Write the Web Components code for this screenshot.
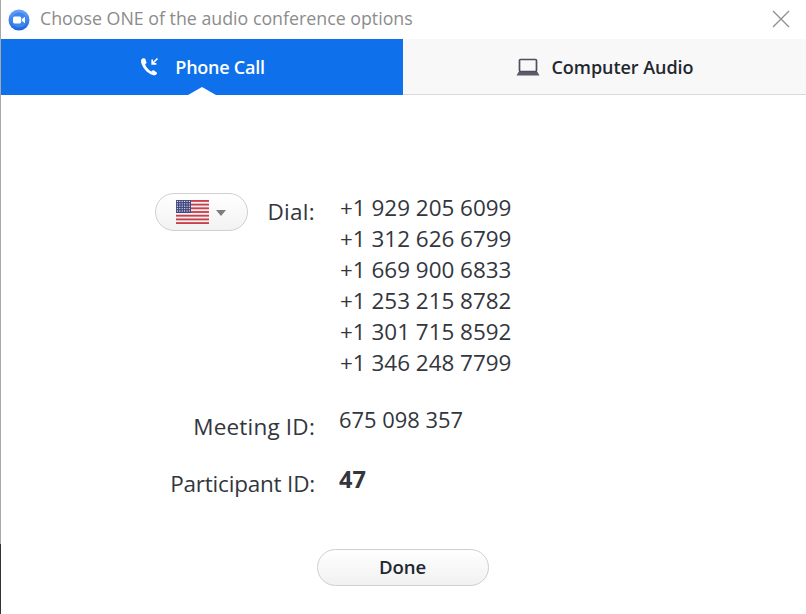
<!DOCTYPE html>
<html>
<head>
<meta charset="utf-8">
<title>Audio conference options</title>
<style>
  html, body { margin: 0; padding: 0; background: #fff; }
  body { width: 806px; height: 614px; overflow: hidden; font-family: "Open Sans", "Noto Sans", sans-serif; }
</style>
</head>
<body>
<audio-dialog>
  <title-bar slot="title">Choose ONE of the audio conference options</title-bar>
  <tab-strip slot="tabs"></tab-strip>
  <dial-panel slot="panel"></dial-panel>
</audio-dialog>

<script>
class AudioDialog extends HTMLElement {
  constructor() {
    super();
    const shadow = this.attachShadow({ mode: 'open' });
    shadow.innerHTML = `
      <style>
        :host {
          display: flex;
          flex-direction: column;
          box-sizing: border-box;
          width: 806px;
          height: 614px;
          background: #fff;
          border-left: 1px solid;
          border-image: linear-gradient(to bottom, #a8a8a8 0, #a8a8a8 543px, #333 543px, #333 100%) 1;
        }
      </style>
      <slot name="title"></slot>
      <slot name="tabs"></slot>
      <slot name="panel"></slot>
    `;
  }
}

class TitleBar extends HTMLElement {
  constructor() {
    super();
    const shadow = this.attachShadow({ mode: 'open' });
    shadow.innerHTML = `
      <style>
        :host {
          display: flex;
          align-items: center;
          height: 39px;
          flex: none;
          padding: 0 15px 0 7px;
          color: #8c8c8c;
          font-size: 17.8px;
        }
        svg { flex: none; }
        .logo { margin-right: 10px; }
        .text { flex: 1; white-space: nowrap; margin-top: -3px; }
      </style>
      <svg class="logo" width="22" height="22" viewBox="0 0 22 22">
        <defs>
          <linearGradient id="zoomBlue" x1="0" y1="0" x2="0" y2="1">
            <stop offset="0" stop-color="#6aa6f6"/>
            <stop offset="1" stop-color="#1b64dc"/>
          </linearGradient>
        </defs>
        <circle cx="11" cy="11" r="10.5" fill="url(#zoomBlue)"/>
        <circle cx="11" cy="11" r="7.6" fill="#3f86ee"/>
        <rect x="5" y="7.6" width="8.2" height="6.8" rx="1.6" fill="#fff"/>
        <path d="M14 10l3-2.2v6.4L14 12z" fill="#fff"/>
      </svg>
      <span class="text"><slot></slot></span>
      <svg width="19" height="19" viewBox="0 0 19 19">
        <path d="M1 1l16 16M17 1L1 17" stroke="#8f8f8f" stroke-width="1.3" fill="none"/>
      </svg>
    `;
  }
}

class TabStrip extends HTMLElement {
  constructor() {
    super();
    const shadow = this.attachShadow({ mode: 'open' });
    shadow.innerHTML = `
      <style>
        :host {
          display: grid;
          grid-template-columns: 402px 1fr;
          height: 56px;
          flex: none;
          box-sizing: border-box;
        }
        .tab {
          position: relative;
          display: flex;
          align-items: center;
          justify-content: center;
          gap: 12px;
          font-size: 18px;
          font-weight: 600;
          letter-spacing: -0.05px;
        }
        .active { background: #0e71eb; color: #fff; gap: 14px; letter-spacing: -0.25px; }
        .active::after {
          content: "";
          position: absolute;
          left: 50%;
          bottom: 0;
          margin-left: -14px;
          border-left: 14px solid transparent;
          border-right: 14px solid transparent;
          border-bottom: 8px solid #fff;
        }
        .idle { background: #f8f8f8; color: #23272f; border-bottom: 1px solid #d9d9d9; }
      </style>
      <div class="tab active">
        <svg width="22" height="22" viewBox="0 0 22 22" fill="none">
          <path d="M3.4 2.6c-1.2.8-1.7 2-1.3 3.6 1.2 5.4 6.2 11 11.6 12.8 1.8.6 3 .1 4-1.1.5-.6.4-1.2-.2-1.7l-2.4-1.8c-.6-.4-1.1-.3-1.6.2l-1 1c-2.9-1.4-5.2-4-6.4-7l1-1c.5-.5.6-1 .2-1.6L6.4 3c-.7-1-1.8-1.1-3-.4z" fill="#fff"/>
          <path d="M18.5 2.5l-5 5M13.2 3.6v4.2h4.2" stroke="#fff" stroke-width="1.7"/>
        </svg>
        <span>Phone Call</span>
      </div>
      <div class="tab idle">
        <svg width="24" height="18" viewBox="0 0 24 18" fill="none">
          <rect x="3.5" y="1.5" width="17" height="12" rx="1" stroke="#4e4e5c" stroke-width="1.7"/>
          <path d="M2.5 14h19l2 3.5H.5z" fill="#5a5a69"/>
        </svg>
        <span>Computer Audio</span>
      </div>
    `;
  }
}

class FlagPicker extends HTMLElement {
  constructor() {
    super();
    const shadow = this.attachShadow({ mode: 'open' });
    const stripes = [];
    for (let i = 0; i < 7; i++) {
      stripes.push(`<rect x="0" y="${(i * 2 * 24 / 13).toFixed(2)}" width="33" height="${(24 / 13).toFixed(2)}" fill="#c8404e"/>`);
    }
    let stars = '';
    for (let r = 0; r < 5; r++) {
      for (let c = 0; c < 6; c++) {
        stars += `<circle cx="${1.4 + c * 2.4}" cy="${1.4 + r * 2.4}" r="0.65" fill="#e6e6f2"/>`;
      }
    }
    shadow.innerHTML = `
      <style>
        :host {
          display: flex;
          align-items: center;
          justify-content: center;
          gap: 7px;
          box-sizing: border-box;
          width: 93px;
          height: 38px;
          padding-right: 2px;
          border: 1.5px solid #d0d0d0;
          border-radius: 19px;
          background: linear-gradient(to bottom, #fff, #f2f2f2);
        }
        .caret {
          width: 0;
          height: 0;
          margin-top: 2px;
          border-left: 5px solid transparent;
          border-right: 5px solid transparent;
          border-top: 6px solid #7d7d7d;
        }
      </style>
      <svg width="33" height="24" viewBox="0 0 33 24">
        <rect width="33" height="24" fill="#f3f0f0"/>
        ${stripes.join('')}
        <rect width="15" height="13" fill="#41477f"/>
        ${stars}
      </svg>
      <span class="caret"></span>
    `;
  }
}

class PillButton extends HTMLElement {
  constructor() {
    super();
    const shadow = this.attachShadow({ mode: 'open' });
    shadow.innerHTML = `
      <style>
        :host {
          display: flex;
          align-items: center;
          justify-content: center;
          box-sizing: border-box;
          width: 172px;
          height: 37px;
          border: 1.5px solid #cfcfcf;
          border-radius: 19px;
          background: linear-gradient(to bottom, #fff, #f1f1f1);
          color: #23272f;
          font-size: 18.6px;
          font-weight: 600;
          letter-spacing: -0.1px;
          padding-bottom: 3px;
        }
      </style>
      <slot></slot>
    `;
  }
}

class DialPanel extends HTMLElement {
  constructor() {
    super();
    const shadow = this.attachShadow({ mode: 'open' });
    shadow.innerHTML = `
      <style>
        :host {
          display: flex;
          flex-direction: column;
          flex: 1;
          padding-top: 97px;
          color: #33363d;
        }
        .info {
          display: grid;
          grid-template-columns: 160px auto;
          column-gap: 25px;
          margin-left: 154px;
          justify-content: start;
          font-size: 22.5px;
        }
        .label { display: flex; justify-content: flex-end; gap: 19px; white-space: nowrap; line-height: 28px; }
        .label flag-picker { flex: none; margin-top: 1px; }
        .dial-label { padding-top: 6px; letter-spacing: 0.3px; }
        .numbers { font-size: 22.45px; line-height: 31px; white-space: nowrap; }
        .meeting-label { margin-top: 35px; letter-spacing: 0.2px; }
        .meeting-value { margin-top: 26px; margin-left: -1px; font-size: 21.9px; line-height: 31px; }
        .part-label { margin-top: 29px; letter-spacing: -0.2px; }
        .part-value { margin-top: 23px; margin-left: -1px; font-size: 23.5px; line-height: 31px; font-weight: 700; }
        .actions { display: flex; justify-content: center; margin-top: 51px; padding-right: 2px; }
      </style>
      <div class="info">
        <div class="label">
          <flag-picker></flag-picker>
          <span class="dial-label">Dial:</span>
        </div>
        <div class="numbers">
          <div>+1 929 205 6099</div>
          <div>+1 312 626 6799</div>
          <div>+1 669 900 6833</div>
          <div>+1 253 215 8782</div>
          <div>+1 301 715 8592</div>
          <div>+1 346 248 7799</div>
        </div>
        <div class="label meeting-label">Meeting ID:</div>
        <div class="meeting-value">675 098 357</div>
        <div class="label part-label">Participant ID:</div>
        <div class="part-value">47</div>
      </div>
      <div class="actions"><pill-button>Done</pill-button></div>
    `;
  }
}

customElements.define('audio-dialog', AudioDialog);
customElements.define('title-bar', TitleBar);
customElements.define('tab-strip', TabStrip);
customElements.define('flag-picker', FlagPicker);
customElements.define('pill-button', PillButton);
customElements.define('dial-panel', DialPanel);
</script>
</body>
</html>
